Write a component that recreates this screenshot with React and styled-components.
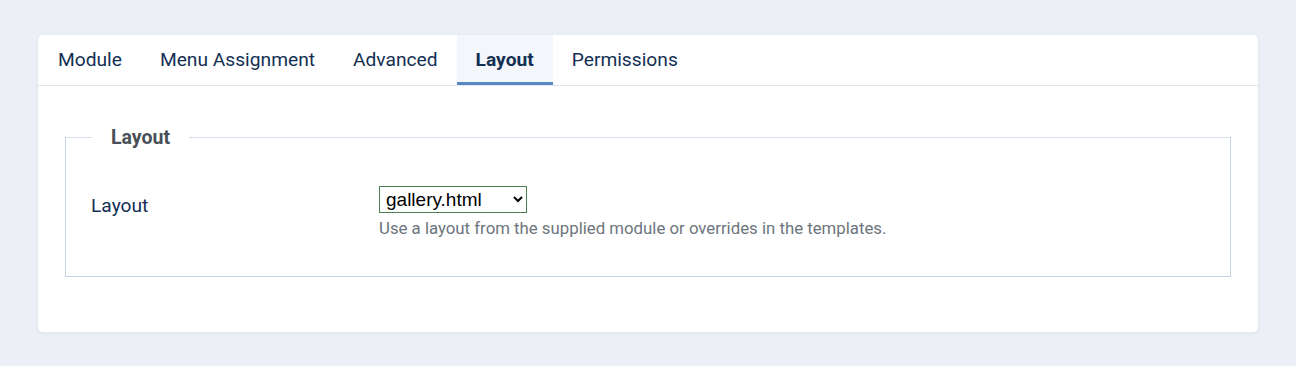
import styled, { createGlobalStyle } from "styled-components";

const GlobalStyle = createGlobalStyle`
  html, body {
    margin: 0;
    padding: 0;
    background: #ecf0f6;
    font-family: Roboto, "Noto Sans", sans-serif;
  }
`;

const Page = styled.div`
  padding: 35px 38px 34px 38px;
`;

const Card = styled.div`
  background: #fff;
  border-radius: 5px;
  box-shadow: 0 1px 4px rgba(30, 60, 110, 0.08);
  overflow: hidden;
`;

const TabBar = styled.div`
  display: flex;
  border-bottom: 1px solid #dfe5ef;
  height: 50px;
`;

const Tab = styled.div`
  display: flex;
  align-items: center;
  padding: 0 19px 2px 19px;
  font-size: 19.2px;
  color: #132f53;
  font-weight: ${(p) => (p.active ? 700 : 400)};
  background: ${(p) => (p.active ? "#f3f6fa" : "transparent")};
  box-shadow: ${(p) => (p.active ? "inset 0 -3px 0 #5a87c6" : "none")};
  &:first-child {
    padding-left: 20px;
  }
`;

const Body = styled.div`
  padding: 40px 27px 55px 27px;
`;

const Fieldset = styled.fieldset`
  margin: 0;
  border: 1px solid #c7d4e8;
  border-top-color: #d5dee9;
  padding: 37px 26px 38px 25px;
`;

const Legend = styled.legend`
  margin-left: 1px;
  padding: 0 19px 0 19px;
  font-size: 19.5px;
  font-weight: 700;
  color: #495057;
`;

const Row = styled.div`
  display: grid;
  grid-template-columns: 288px 1fr;
  align-items: start;
`;

const Label = styled.label`
  font-size: 19.2px;
  color: #132f53;
  padding-top: 8px;
`;

const Control = styled.div`
  display: flex;
  flex-direction: column;
  align-items: flex-start;
`;

const Select = styled.select`
  font-family: "Liberation Sans", Arial, sans-serif;
  font-size: 19px;
  color: #000;
  height: 27px;
  width: 148px;
  border: 1px solid #4d7f50;
  border-radius: 0;
  background: #fff;
  padding: 0 2px;
`;

const Hint = styled.div`
  margin-top: 5px;
  font-size: 16.8px;
  color: #6d757d;
`;

export default function App() {
  const tabs = ["Module", "Menu Assignment", "Advanced", "Layout", "Permissions"];
  return (
    <Page>
      <GlobalStyle />
      <Card>
        <TabBar>
          {tabs.map((t) => (
            <Tab key={t} active={t === "Layout"}>
              {t}
            </Tab>
          ))}
        </TabBar>
        <Body>
          <Fieldset>
            <Legend>Layout</Legend>
            <Row>
              <Label>Layout</Label>
              <Control>
                <Select defaultValue="gallery">
                  <option value="gallery">gallery.html</option>
                  <option value="default">default</option>
                </Select>
                <Hint>Use a layout from the supplied module or overrides in the templates.</Hint>
              </Control>
            </Row>
          </Fieldset>
        </Body>
      </Card>
    </Page>
  );
}
